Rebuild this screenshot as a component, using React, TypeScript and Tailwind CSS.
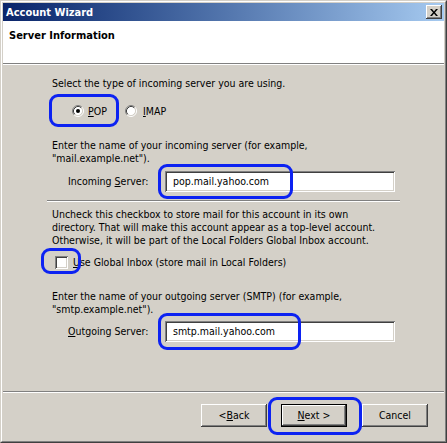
import React from "react"

function Radio({ checked }: { checked?: boolean }) {
  return (
    <svg width="12" height="12" viewBox="0 0 12 12" className="shrink-0">
      <circle cx="6" cy="6" r="4.5" fill="#ffffff" />
      <path d="M2.11 9.89 A5.5 5.5 0 0 1 9.89 2.11" fill="none" stroke="#808080" />
      <path d="M9.89 2.11 A5.5 5.5 0 0 1 2.11 9.89" fill="none" stroke="#ffffff" />
      <path d="M2.82 9.18 A4.5 4.5 0 0 1 9.18 2.82" fill="none" stroke="#404040" />
      <path d="M9.18 2.82 A4.5 4.5 0 0 1 2.82 9.18" fill="none" stroke="#d4d0c8" />
      {checked && <circle cx="6" cy="6" r="2" fill="#000000" />}
    </svg>
  )
}

function Etched({ className = "" }: { className?: string }) {
  return <div className={"h-[2px] border-t border-t-[#808080] border-b border-b-white " + className} />
}

function TextBox({ value }: { value: string }) {
  return (
    <div className="w-[230px] h-[21px] bg-white flex items-center pl-[8px] shadow-[inset_1px_1px_#808080,inset_-1px_-1px_#ffffff,inset_2px_2px_#404040,inset_-2px_-2px_#d4d0c8]">
      {value}
    </div>
  )
}

function WinButton({ children, primary }: { children: React.ReactNode; primary?: boolean }) {
  return (
    <div
      className={
        primary
          ? "w-[66px] h-[23px] border border-black flex"
          : "w-[66px] h-[23px] flex"
      }
    >
      <div className="flex-1 flex items-center justify-center bg-[#d4d0c8] shadow-[inset_-1px_-1px_#404040,inset_1px_1px_#ffffff,inset_-2px_-2px_#808080]">
        {children}
      </div>
    </div>
  )
}

function Highlight({ className }: { className: string }) {
  return <div className={"absolute border-[3px] border-[#0c22f2] rounded-[9px] pointer-events-none " + className} />
}

export default function App() {
  return (
    <div className="relative w-[447px] h-[443px] flex bg-[#d4d0c8] text-black text-[10.5px] leading-[13px] font-['DejaVu_Sans_Condensed','Liberation_Sans',sans-serif] border border-t-[#d4d0c8] border-l-[#d4d0c8] border-r-[#404040] border-b-[#404040]">
      <div className="flex-1 flex flex-col p-px border border-t-white border-l-white border-r-[#808080] border-b-[#808080]">
        {/* title bar */}
        <div className="h-[18px] shrink-0 flex items-center justify-between pl-[3px] pr-[2px] bg-linear-to-r from-[#0a246a] to-[#a6caf0]">
          <span className="font-bold text-white text-[11px]">Account Wizard</span>
          <div className="w-[16px] h-[14px] flex items-center justify-center bg-[#d4d0c8] shadow-[inset_-1px_-1px_#404040,inset_1px_1px_#ffffff,inset_-2px_-2px_#808080]">
            <svg width="8" height="7" viewBox="0 0 8 7">
              <path d="M0 0h2l2 2.5L6 0h2L5 3.5 8 7H6L4 4.5 2 7H0l3-3.5z" fill="#000000" />
            </svg>
          </div>
        </div>

        {/* header */}
        <div className="h-[42px] shrink-0 bg-white pl-[6px] pt-[8px]">
          <span className="font-bold text-[11px]">Server Information</span>
        </div>
        <Etched className="shrink-0" />

        {/* page content */}
        <div className="flex-1 flex flex-col pl-[49px] whitespace-nowrap">
          <p className="mt-[12px]">Select the type of incoming server you are using.</p>
          <div className="mt-[13px] h-[16px] flex items-center pl-[20px]">
            <div className="w-[53px] flex items-center gap-[4px]">
              <Radio checked />
              <span>
                <u>P</u>OP
              </span>
            </div>
            <div className="flex items-center gap-[6px]">
              <Radio />
              <span>
                <u>I</u>MAP
              </span>
            </div>
          </div>

          <p className="mt-[20px]">
            Enter the name of your incoming server (for example,
            <br />
            "mail.example.net").
          </p>
          <div className="mt-[6px] flex items-center pl-[16px]">
            <span className="w-[97px]">
              Incoming <u>S</u>erver:
            </span>
            <TextBox value="pop.mail.yahoo.com" />
          </div>

          <Etched className="mt-[8px] -ml-[5px] w-[353px]" />

          <p className="mt-[6px]">
            Uncheck this checkbox to store mail for this account in its own
            <br />
            directory. That will make this account appear as a top-level account.
            <br />
            Otherwise, it will be part of the Local Folders Global Inbox account.
          </p>
          <div className="mt-[7px] h-[16px] flex items-center pl-[3px] gap-[5px]">
            <div className="w-[13px] h-[13px] bg-white shadow-[inset_1px_1px_#808080,inset_-1px_-1px_#ffffff,inset_2px_2px_#404040,inset_-2px_-2px_#d4d0c8]" />
            <span>
              <u>U</u>se Global Inbox (store mail in Local Folders)
            </span>
          </div>

          <p className="mt-[20px]">
            Enter the name of your outgoing server (SMTP) (for example,
            <br />
            "smtp.example.net").
          </p>
          <div className="mt-[5px] flex items-center pl-[16px]">
            <span className="w-[97px]">
              <u>O</u>utgoing Server:
            </span>
            <TextBox value="smtp.mail.yahoo.com" />
          </div>
        </div>

        <Etched className="shrink-0" />

        {/* wizard buttons */}
        <div className="h-[47px] shrink-0 flex justify-end items-start pt-[11px] pr-[16px]">
          <WinButton>
            &lt; <u>B</u>ack
          </WinButton>
          <div className="ml-[14px]">
            <WinButton primary>
              <u>N</u>ext &gt;
            </WinButton>
          </div>
          <div className="ml-[15px]">
            <WinButton>Cancel</WinButton>
          </div>
        </div>
      </div>

      {/* blue annotation marks */}
      <Highlight className="left-[48px] top-[93px] w-[70px] h-[33px]" />
      <Highlight className="left-[157px] top-[163px] w-[135px] h-[35px]" />
      <Highlight className="left-[40px] top-[247px] w-[40px] h-[26px]" />
      <Highlight className="left-[157px] top-[312px] w-[143px] h-[37px]" />
      <Highlight className="left-[267px] top-[396px] w-[94px] h-[38px]" />
    </div>
  )
}
